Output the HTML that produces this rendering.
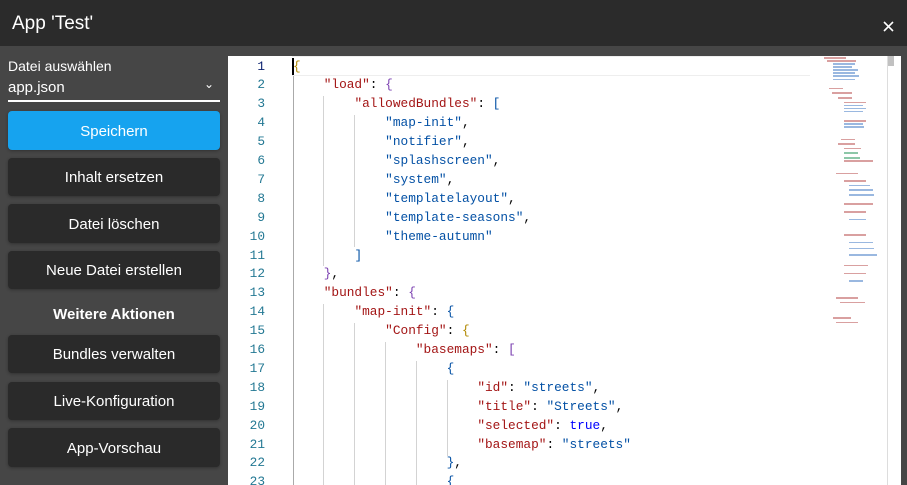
<!DOCTYPE html>
<html><head><meta charset="utf-8"><style>
*{margin:0;padding:0;box-sizing:border-box}
body{width:907px;height:485px;overflow:hidden;background:#464646;font-family:"Liberation Sans",sans-serif;position:relative}
.hdr{position:absolute;left:0;top:0;width:907px;height:46px;background:#2b2b2b;color:#fff;font-size:19px;line-height:48px;padding-left:12px}
.x{position:absolute;left:883px;top:21px}
.lbl{position:absolute;left:8px;top:58px;color:#fff;font-size:14px}
.sel{position:absolute;left:8px;top:79px;width:212px;height:23px;border-bottom:2px solid #fff;color:#fff;font-size:15px}
.sel span{position:absolute;right:6px;top:-2px;font-size:12px}
.btn{position:absolute;left:8px;width:212px;border-radius:4px;background:#2a2a2a;color:#fff;font-size:15px;text-align:center;box-shadow:0 1px 3px rgba(0,0,0,.3);padding-top:2px}
.blue{background:#16a3ef}
.wa{position:absolute;left:8px;width:212px;text-align:center;top:306px;color:#fff;font-weight:bold;font-size:15px}
.ed{position:absolute;left:228px;top:56px;width:673px;height:429px;background:#fff;overflow:hidden}
.ln{position:absolute;left:0;width:37px;text-align:right;font-family:"Liberation Mono",monospace;font-size:12.8px;color:#237893;height:18.9px;line-height:18.9px}
.cd{position:absolute;left:65px;white-space:pre;font-family:"Liberation Mono",monospace;font-size:12.8px;color:#000;height:18.9px;line-height:18.9px}
.k{color:#a31515}.s{color:#0451a5}.t{color:#0000ff}.b1{color:#b08800}.b2{color:#7a3fb0}.b3{color:#0451a5}
.g{position:absolute;width:1px;background:#d3d3d3}
.mm{position:absolute;height:1.5px}
</style></head><body>
<div class="hdr">App 'Test'</div>
<svg class="x" width="11" height="11" viewBox="0 0 11 11"><path d="M1 1L10 10M10 1L1 10" stroke="#fff" stroke-width="1.6"/></svg>
<div class="lbl">Datei auswählen</div>
<div class="sel">app.json<span>⌄</span></div>
<div class="btn blue" style="top:111px;height:39px;line-height:37px">Speichern</div>
<div class="btn" style="top:158px;height:38px;line-height:36px">Inhalt ersetzen</div>
<div class="btn" style="top:204px;height:39px;line-height:37px">Datei löschen</div>
<div class="btn" style="top:251px;height:38px;line-height:36px">Neue Datei erstellen</div>
<div class="wa">Weitere Aktionen</div>
<div class="btn" style="top:335px;height:38px;line-height:36px">Bundles verwalten</div>
<div class="btn" style="top:382px;height:38px;line-height:36px">Live-Konfiguration</div>
<div class="btn" style="top:428px;height:39px;line-height:37px">App-Vorschau</div>
<div class="ed">
<div style="position:absolute;left:64px;top:0;width:518px;height:20px;border-top:1px solid #eee;border-bottom:1px solid #eee"></div>
<div style="position:absolute;left:64px;top:2px;width:2px;height:17px;background:#000"></div>
<div class="g" style="left:65px;top:20px;height:410px;background:#aaa"></div>
<div class="g" style="left:95px;top:40px;height:170px"></div>
<div class="g" style="left:126px;top:59px;height:132px"></div>
<div class="g" style="left:95px;top:248px;height:190px"></div>
<div class="g" style="left:126px;top:267px;height:170px"></div>
<div class="g" style="left:157px;top:286px;height:150px"></div>
<div class="g" style="left:188px;top:305px;height:130px"></div>
<div class="g" style="left:219px;top:324px;height:76px"></div>
<div id="c"></div>
<div style="position:absolute;left:660px;top:0;width:6px;height:10px;background:#c1c1c1"></div>
<div style="position:absolute;left:659px;top:0;width:1px;height:429px;background:#ddd"></div>
</div>
<script>
var L=[
'<span class="b1">{</span>',
'    <span class="k">"load"</span>: <span class="b2">{</span>',
'        <span class="k">"allowedBundles"</span>: <span class="b3">[</span>',
'            <span class="s">"map-init"</span>,',
'            <span class="s">"notifier"</span>,',
'            <span class="s">"splashscreen"</span>,',
'            <span class="s">"system"</span>,',
'            <span class="s">"templatelayout"</span>,',
'            <span class="s">"template-seasons"</span>,',
'            <span class="s">"theme-autumn"</span>',
'        <span class="b3">]</span>',
'    <span class="b2">}</span>,',
'    <span class="k">"bundles"</span>: <span class="b2">{</span>',
'        <span class="k">"map-init"</span>: <span class="b3">{</span>',
'            <span class="k">"Config"</span>: <span class="b1">{</span>',
'                <span class="k">"basemaps"</span>: <span class="b2">[</span>',
'                    <span class="b3">{</span>',
'                        <span class="k">"id"</span>: <span class="s">"streets"</span>,',
'                        <span class="k">"title"</span>: <span class="s">"Streets"</span>,',
'                        <span class="k">"selected"</span>: <span class="t">true</span>,',
'                        <span class="k">"basemap"</span>: <span class="s">"streets"</span>',
'                    <span class="b3">}</span>,',
'                    <span class="b3">{</span>'];
var h='';
for(var i=0;i<L.length;i++){var y=(i*18.9+1.5).toFixed(1);
h+='<div class="ln" style="top:'+y+'px;'+(i==0?'color:#0b216f':'')+'">'+(i+1)+'</div><div class="cd" style="top:'+y+'px">'+L[i]+'</div>';}
var mm=[[8,0,30,'#d9a0a0'],[12,4,40,'#d9a0a0'],[20,8,30,'#9ab8e0'],[20,12,26,'#9ab8e0'],[20,16,34,'#9ab8e0'],[20,20,30,'#9ab8e0'],[20,24,36,'#9ab8e0'],[20,28,30,'#9ab8e0'],[14,40,20,'#d9a0a0'],[18,46,28,'#d9a0a0'],[26,52,20,'#d9a0a0'],[34,58,30,'#d9a0a0'],[34,62,26,'#9ab8e0'],[34,66,30,'#9ab8e0'],[34,70,26,'#9ab8e0'],[34,82,30,'#d9a0a0'],[34,86,26,'#9ab8e0'],[34,90,28,'#9ab8e0'],[30,106,20,'#d9a0a0'],[26,112,24,'#d9a0a0'],[34,118,24,'#d9a0a0'],[34,124,20,'#8cc7a8'],[34,130,22,'#8cc7a8'],[34,134,40,'#d9a0a0'],[24,150,30,'#d9a0a0'],[34,160,30,'#d9a0a0'],[40,166,30,'#9ab8e0'],[40,172,34,'#9ab8e0'],[40,178,36,'#9ab8e0'],[34,190,40,'#d9a0a0'],[34,200,30,'#d9a0a0'],[40,210,24,'#9ab8e0'],[34,230,30,'#d9a0a0'],[40,240,34,'#9ab8e0'],[40,248,36,'#9ab8e0'],[40,256,40,'#9ab8e0'],[34,270,34,'#d9a0a0'],[34,280,30,'#d9a0a0'],[40,290,20,'#9ab8e0'],[24,312,30,'#d9a0a0'],[28,318,36,'#d9a0a0'],[20,338,24,'#d9a0a0'],[24,344,30,'#d9a0a0']];
for(var j=0;j<mm.length;j++){var m=mm[j];h+='<div class="mm" style="left:'+(590+m[0]/1.3)+'px;top:'+(m[1]*0.77+1)+'px;width:'+(m[2]/1.4)+'px;background:'+m[3]+'"></div>';}
document.getElementById('c').innerHTML=h;
</script>
</body></html>
